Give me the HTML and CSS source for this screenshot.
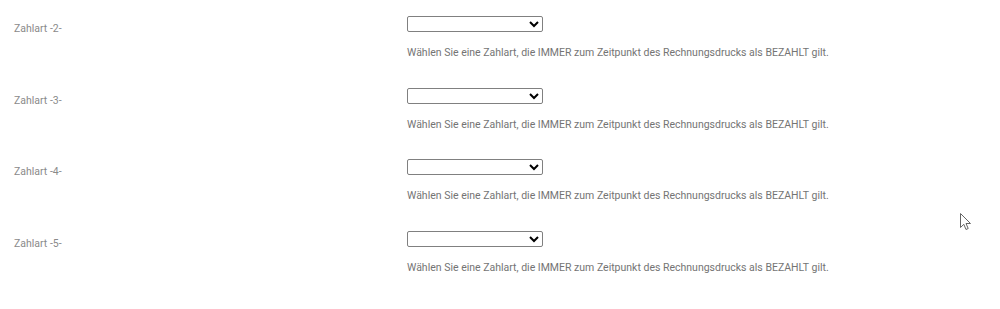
FILE: index.html
```html
<!DOCTYPE html>
<html lang="de">
<head>
<meta charset="utf-8">
<link rel="stylesheet" href="styles.css">
</head>
<body>
<div class="form">
  <div class="row">
    <label class="label">Zahlart -2-</label>
    <div class="field">
      <select class="sel"><option></option></select>
      <p class="help">Wählen Sie eine Zahlart, die IMMER zum Zeitpunkt des Rechnungsdrucks als BEZAHLT gilt.</p>
    </div>
  </div>
  <div class="row">
    <label class="label">Zahlart -3-</label>
    <div class="field">
      <select class="sel"><option></option></select>
      <p class="help">Wählen Sie eine Zahlart, die IMMER zum Zeitpunkt des Rechnungsdrucks als BEZAHLT gilt.</p>
    </div>
  </div>
  <div class="row">
    <label class="label">Zahlart -4-</label>
    <div class="field">
      <select class="sel"><option></option></select>
      <p class="help">Wählen Sie eine Zahlart, die IMMER zum Zeitpunkt des Rechnungsdrucks als BEZAHLT gilt.</p>
    </div>
  </div>
  <div class="row">
    <label class="label">Zahlart -5-</label>
    <div class="field">
      <select class="sel"><option></option></select>
      <p class="help">Wählen Sie eine Zahlart, die IMMER zum Zeitpunkt des Rechnungsdrucks als BEZAHLT gilt.</p>
    </div>
  </div>
</div>
<svg class="cursor" width="13" height="19" viewBox="0 0 13 19"><path d="M0.5 0.5 L0.5 14.5 L3.8 11.3 L6 16.5 L8.2 15.5 L6 10.5 L10.5 10.5 Z" fill="#fff" stroke="#666" stroke-width="1"/></svg>
</body>
</html>
```
FILE: styles.css
```css
html, body {
  margin: 0;
  padding: 0;
  background: #fff;
}
body {
  font-family: Roboto, "Liberation Sans", sans-serif;
  position: relative;
  width: 1000px;
  height: 309px;
  overflow: hidden;
}
.form {
  display: flex;
  flex-direction: column;
  padding-top: 16px;
}
.row {
  display: flex;
  height: 71.5px;
}
.label {
  width: 393px;
  padding-left: 14px;
  padding-top: 7px;
  font-size: 10.5px;
  line-height: 12px;
  color: #8a8a8a;
}
.field {
  display: flex;
  flex-direction: column;
}
.sel {
  width: 136px;
  height: 16px;
  margin: 0;
  padding: 0;
  border: 1px solid #808080;
  border-radius: 2px;
  background: #fff;
  font-size: 9px;
}
.help {
  margin: 15px 0 0 0;
  font-size: 10.5px;
  line-height: 12px;
  color: #747474;
}
.cursor {
  position: absolute;
  left: 960px;
  top: 213px;
}
```
